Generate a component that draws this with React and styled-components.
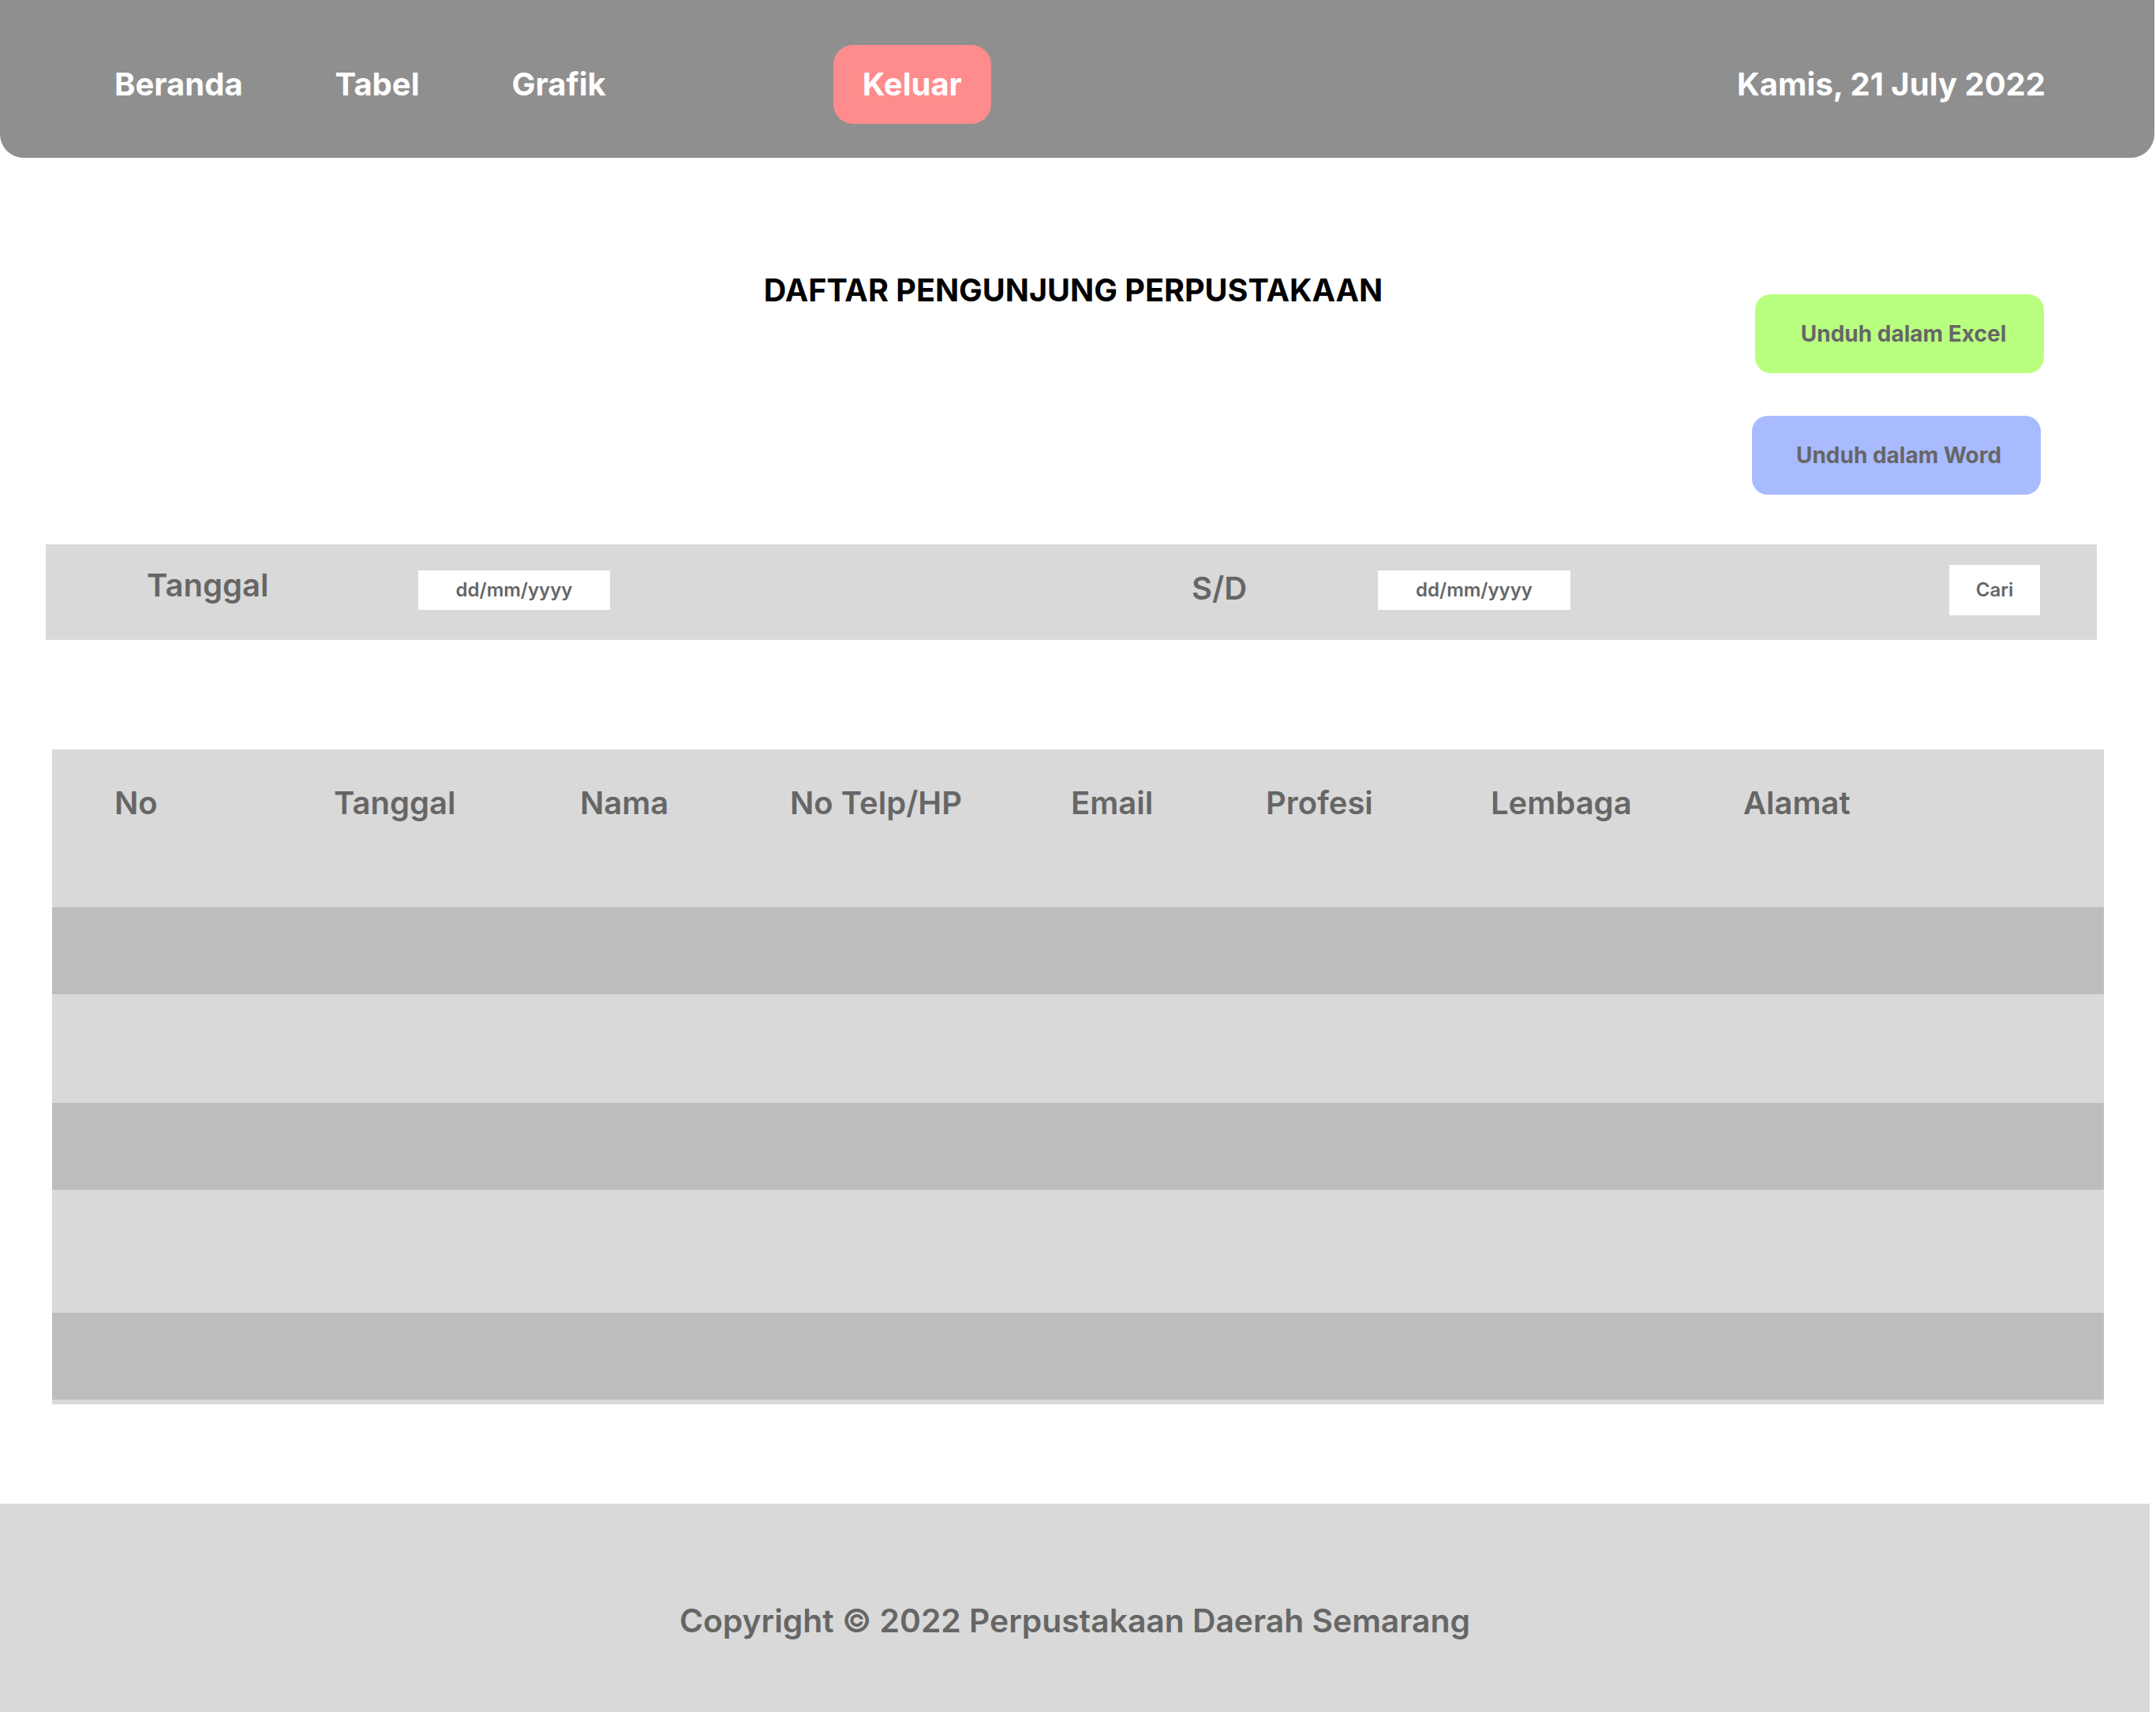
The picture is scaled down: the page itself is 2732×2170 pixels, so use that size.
import React from 'react';
import styled, { createGlobalStyle } from 'styled-components';

const GlobalStyle = createGlobalStyle`
  * { box-sizing: border-box; }
  body {
    margin: 0;
    background: #ffffff;
    font-family: 'Inter', 'Liberation Sans', sans-serif;
  }
`;

const Page = styled.div`
  width: 2732px;
  background: #ffffff;
`;

const Header = styled.header`
  width: 2730px;
  height: 200px;
  padding: 13px 138px 0 145px;
  display: flex;
  align-items: center;
  justify-content: space-between;
  background: #8f8f8f;
  border-radius: 0 0 30px 30px;
`;

const Nav = styled.nav`
  display: flex;
  align-items: center;
  gap: 117px;
`;

const NavLink = styled.a`
  font-size: 40px;
  font-weight: 700;
  color: #ffffff;
  text-decoration: none;
  cursor: pointer;
`;

const LogoutButton = styled.button`
  width: 200px;
  height: 100px;
  margin-left: 171px;
  border: none;
  border-radius: 25px;
  background: #ff8c8c;
  color: #ffffff;
  font-family: inherit;
  font-size: 40px;
  font-weight: 700;
  cursor: pointer;
`;

const DateText = styled.div`
  font-size: 40px;
  font-weight: 700;
  color: #ffffff;
`;

const TopSection = styled.section`
  display: grid;
  grid-template-columns: 1fr auto 1fr;
  padding: 0 142px 0 130px;
`;

const Title = styled.h1`
  grid-column: 2;
  align-self: start;
  margin: 144px 0 0;
  font-size: 39.6px;
  font-weight: 700;
  color: #000000;
`;

const ButtonStack = styled.div`
  grid-column: 3;
  justify-self: end;
  margin-top: 173px;
  display: flex;
  flex-direction: column;
  align-items: flex-end;
  gap: 54px;
`;

const ExportButton = styled.button`
  width: 366px;
  height: 100px;
  margin-right: ${p => p.$shift || 0}px;
  padding: 0 0 0 ${p => p.$indent || 0}px;
  border: none;
  border-radius: 20px;
  background: ${p => p.$bg};
  color: #666666;
  font-family: inherit;
  font-size: 28px;
  font-weight: 700;
  cursor: pointer;
`;

const FilterBar = styled.div`
  width: 2599px;
  height: 121px;
  margin: 63px 0 0 58px;
  padding: 0 72px 6px 128px;
  display: grid;
  grid-template-columns: 344px 243px 737px 236px 244px 480px 115px;
  align-items: center;
  background: #d9d9d9;
`;

const FilterLabel = styled.div`
  margin-bottom: ${p => p.$raise || 0}px;
  font-size: 40px;
  font-weight: 600;
  color: #666666;
`;

const DateField = styled.div`
  height: 50px;
  display: flex;
  align-items: center;
  justify-content: center;
  background: #ffffff;
  font-size: 24px;
  font-weight: 600;
  color: #666666;
`;

const SearchButton = styled.button`
  height: 64px;
  border: none;
  background: #ffffff;
  color: #666666;
  font-family: inherit;
  font-size: 24px;
  font-weight: 600;
  cursor: pointer;
`;

const Table = styled.div`
  width: 2600px;
  margin: 139px 0 0 66px;
`;

const Row = styled.div`
  height: ${p => p.$h}px;
  display: grid;
  grid-template-columns: 278px 312px 266px 356px 247px 285px 320px 1fr;
  padding-left: 79px;
  background: ${p => (p.$dark ? '#bdbdbd' : '#d9d9d9')};
`;

const HeadCell = styled.div`
  padding-top: 43px;
  font-size: 40px;
  font-weight: 600;
  color: #666666;
  white-space: nowrap;
`;

const Footer = styled.footer`
  width: 2724px;
  height: 264px;
  margin-top: 126px;
  padding-top: 123px;
  background: #d9d9d9;
  text-align: center;
  font-size: 40.8px;
  font-weight: 600;
  color: #666666;
`;

const columns = ['No', 'Tanggal', 'Nama', 'No Telp/HP', 'Email', 'Profesi', 'Lembaga', 'Alamat'];

const bodyRows = [
  { h: 110, dark: true },
  { h: 138, dark: false },
  { h: 110, dark: true },
  { h: 156, dark: false },
  { h: 110, dark: true },
  { h: 6, dark: false },
];

const App = () => {
  return (
    <Page>
      <GlobalStyle />
      <Header>
        <Nav>
          <NavLink>Beranda</NavLink>
          <NavLink>Tabel</NavLink>
          <NavLink>Grafik</NavLink>
          <LogoutButton>Keluar</LogoutButton>
        </Nav>
        <DateText>Kamis, 21 July 2022</DateText>
      </Header>

      <TopSection>
        <Title>DAFTAR PENGUNJUNG PERPUSTAKAAN</Title>
        <ButtonStack>
          <ExportButton $bg="#b9ff7f" $indent={10}>Unduh dalam Excel</ExportButton>
          <ExportButton $bg="#a8bbff" $shift={4} $indent={6}>Unduh dalam Word</ExportButton>
        </ButtonStack>
      </TopSection>

      <FilterBar>
        <FilterLabel $raise={12}>Tanggal</FilterLabel>
        <DateField>dd/mm/yyyy</DateField>
        <div />
        <FilterLabel $raise={4}>S/D</FilterLabel>
        <DateField>dd/mm/yyyy</DateField>
        <div />
        <SearchButton>Cari</SearchButton>
      </FilterBar>

      <Table>
        <Row $h={200}>
          {columns.map(c => (
            <HeadCell key={c}>{c}</HeadCell>
          ))}
        </Row>
        {bodyRows.map((r, i) => (
          <Row key={i} $h={r.h} $dark={r.dark} />
        ))}
      </Table>

      <Footer>Copyright © 2022 Perpustakaan Daerah Semarang</Footer>
    </Page>
  );
};

export default App;
